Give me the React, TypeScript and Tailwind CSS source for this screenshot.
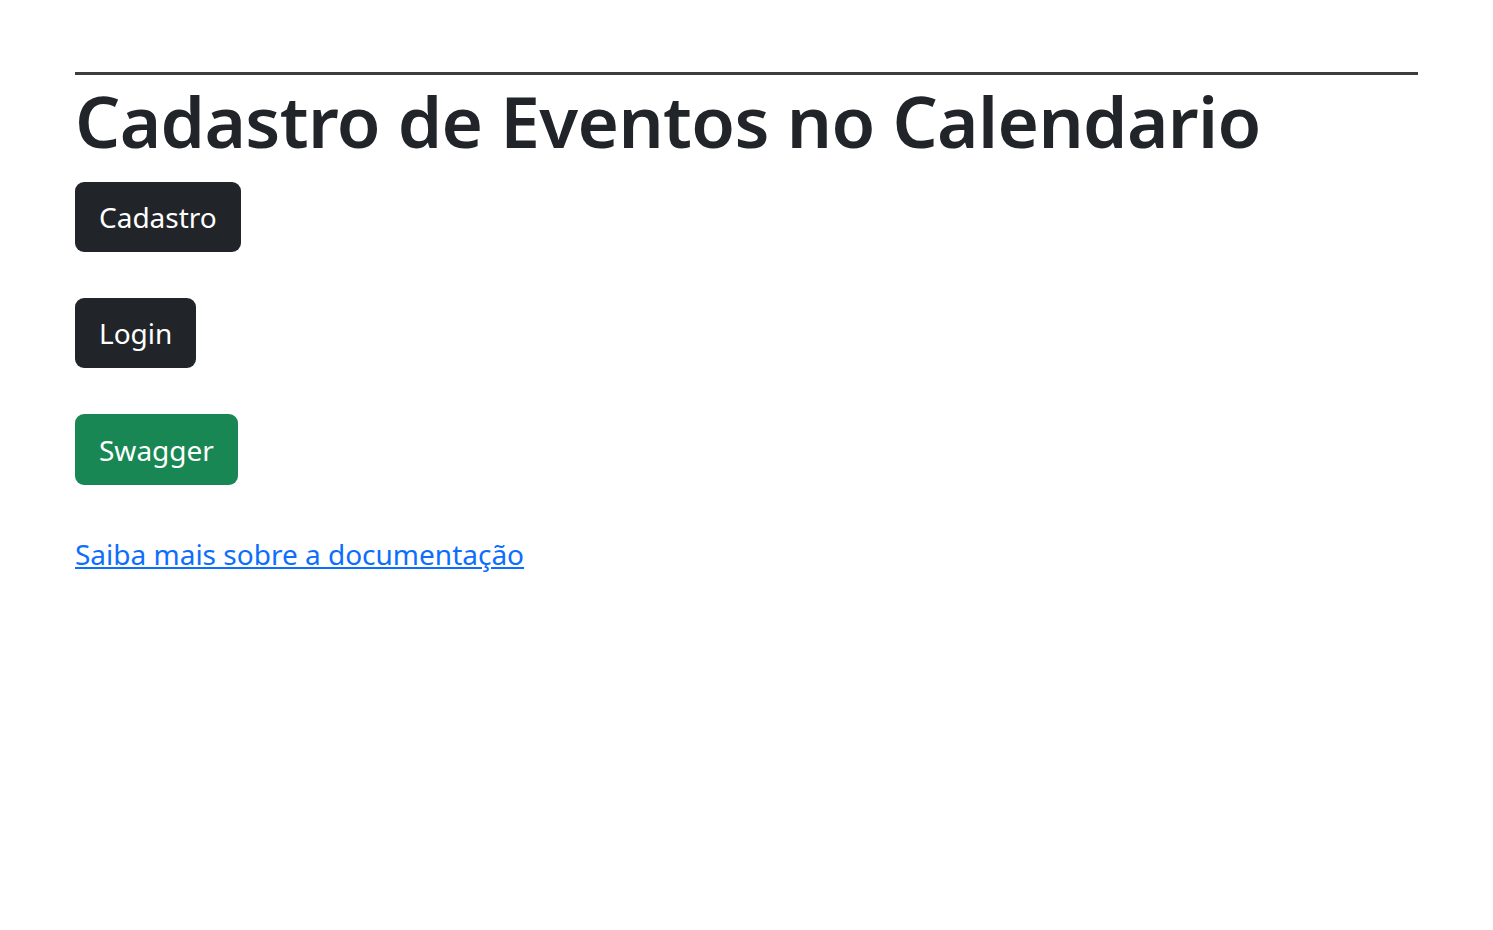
import React from "react";

export default function App() {
  return (
    <div className="min-h-screen bg-white px-[75px] pt-[72px]" style={{ fontFamily: '"Noto Sans", sans-serif' }}>
      <div className="h-[3px] w-full bg-[#3d3d3d]" />
      <h1 className="text-[71px] leading-[86px] font-[560] tracking-[-0.62px] text-[#212529] mt-[3px]">Cadastro de Eventos no Calendario</h1>
      <div className="mt-[18px] flex flex-col items-start gap-[46px]">
        <button className="h-[70px] px-[24px] rounded-[9px] bg-[#212529] text-white text-[28px]">Cadastro</button>
        <button className="h-[70px] px-[24px] rounded-[9px] bg-[#212529] text-white text-[28px]">Login</button>
        <button className="h-[71px] px-[24px] rounded-[9px] bg-[#198754] text-white text-[28px]">Swagger</button>
      </div>
      <div className="mt-[48px]">
        <a href="#" className="text-[28px] text-[#0d6efd] underline">Saiba mais sobre a documentação</a>
      </div>
    </div>
  );
}
